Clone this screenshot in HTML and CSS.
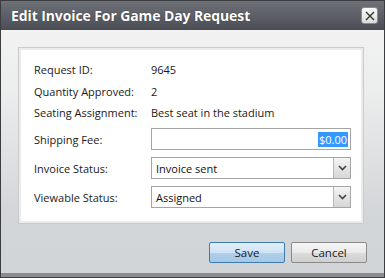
FILE: index.html
```html
<!DOCTYPE html>
<html lang="en">
<head>
  <meta charset="UTF-8" />
  <title>Edit Invoice For Game Day Request</title>
  <link rel="stylesheet" href="styles.css">
</head>
<body>

  <div class="dialog">
    <div class="titlebar">
      <span class="title">Edit Invoice For Game Day Request</span>
      <span class="close">
        <svg width="10" height="10" viewBox="0 0 10 10"><path d="M1 1 L9 9 M9 1 L1 9" stroke="#333" stroke-width="1.4"/></svg>
      </span>
    </div>

    <div class="body">
      <div class="panel">
        <div class="row">
          <span class="label">Request ID:</span>
          <span class="value">9645</span>
        </div>
        <div class="row">
          <span class="label">Quantity Approved:</span>
          <span class="value">2</span>
        </div>
        <div class="row">
          <span class="label">Seating Assignment:</span>
          <span class="value">Best seat in the stadium</span>
        </div>
        <div class="row field first">
          <span class="label">Shipping Fee:</span>
          <div class="input"><span class="sel">$0.00</span></div>
        </div>
        <div class="row field">
          <span class="label">Invoice Status:</span>
          <div class="select">
            <span class="text">Invoice sent</span>
            <span class="arrow"><svg width="9" height="6" viewBox="0 0 9 6"><path d="M1 1 L4.5 4.5 L8 1" fill="none" stroke="#444" stroke-width="1.6"/></svg></span>
          </div>
        </div>
        <div class="row field">
          <span class="label">Viewable Status:</span>
          <div class="select">
            <span class="text">Assigned</span>
            <span class="arrow"><svg width="9" height="6" viewBox="0 0 9 6"><path d="M1 1 L4.5 4.5 L8 1" fill="none" stroke="#444" stroke-width="1.6"/></svg></span>
          </div>
        </div>
      </div>

      <div class="buttons">
        <button class="btn save">Save</button>
        <button class="btn">Cancel</button>
      </div>
    </div>
  </div>

</body>
</html>
```

FILE: styles.css
```css
* {
  box-sizing: border-box;
}
body {
  margin: 0;
  font-family: 'Open Sans', 'DejaVu Sans', sans-serif;
  font-size: 11px;
  color: #1a1a1a;
}
.dialog {
  width: 385px;
  height: 278px;
  border: 1px solid #3c3d40;
  display: flex;
  flex-direction: column;
}
.titlebar {
  height: 29px;
  background: linear-gradient(#6e7177, #4a4d53);
  display: flex;
  align-items: center;
  justify-content: space-between;
  padding: 0 6px 0 10px;
}
.title {
  color: #fff;
  font-weight: bold;
  font-size: 14px;
  letter-spacing: -0.1px;
  text-shadow: 0 0 1px rgba(0,0,0,0.6);
}
.close {
  width: 17px;
  height: 17px;
  background: linear-gradient(#fafafa, #dcdcdc);
  border: 1px solid #8a8c90;
  border-radius: 3px;
  display: flex;
  align-items: center;
  justify-content: center;
}
.body {
  flex: 1;
  background: linear-gradient(#f2f2f2 0, #eceded 25%, #d3d6d8 75%, #d2d5d7);
  border-bottom: 4px solid #8c8d8f;
  padding: 17px 20px 0 17px;
  display: flex;
  flex-direction: column;
}
.panel {
  height: 177px;
  background: #fff;
  border: 1px solid #c9cbcd;
  box-shadow: inset 0 0 0 2px #ebebeb;
  padding: 11px 10px 0 15px;
  display: flex;
  flex-direction: column;
}
.row {
  display: flex;
  align-items: center;
  height: 21.5px;
  flex-shrink: 0;
}
.label {
  width: 117px;
}
.row.field {
  height: 22px;
  margin-top: 7px;
}
.row.field.first {
  margin-top: 4.5px;
}
.input, .select {
  width: 200px;
  height: 22px;
  border: 1px solid #a5a5a5;
  background: #fff;
  display: flex;
  align-items: center;
}
.input {
  justify-content: flex-end;
  padding-right: 2px;
}
.sel {
  background: #3399ff;
  color: #fff;
  padding: 0 1px;
  line-height: 15px;
}
.select {
  justify-content: space-between;
}
.select .text {
  padding-left: 4px;
  color: #111;
}
.arrow {
  width: 17px;
  height: 20px;
  border-left: 1px solid #b8b8b8;
  background: linear-gradient(#f4f4f4, #d6d6d6);
  display: flex;
  align-items: center;
  justify-content: center;
}
.buttons {
  display: flex;
  justify-content: flex-end;
  gap: 6px;
  margin-top: 18px;
  margin-right: -3px;
}
.btn {
  width: 76px;
  height: 21px;
  font-family: 'Open Sans', 'DejaVu Sans', sans-serif;
  font-size: 11.5px;
  color: #1a1a1a;
  border: 1px solid #8a8a8a;
  border-radius: 2px;
  background: linear-gradient(#f5f5f5 0, #eaeaea 50%, #dcdcdc 51%, #cfcfcf);
  padding: 0;
}
.btn.save {
  border-color: #3f7cae;
  background: linear-gradient(#e3eff9 0, #cfe3f4 50%, #b0d0eb 51%, #a6c8e6);
}
```
